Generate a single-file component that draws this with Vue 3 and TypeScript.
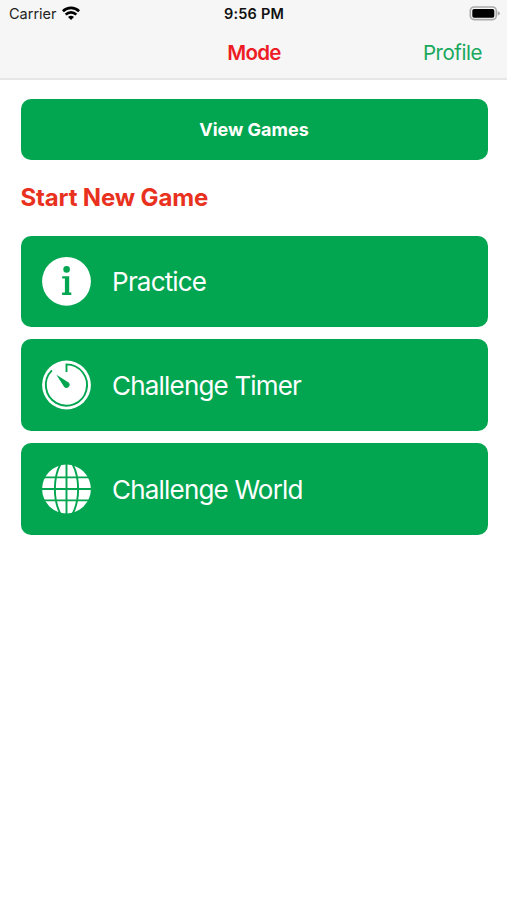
<script setup lang="ts">
type ModeIcon = 'info' | 'timer' | 'globe'

interface GameMode {
  icon: ModeIcon
  label: string
}

const modes: GameMode[] = [
  { icon: 'info', label: 'Practice' },
  { icon: 'timer', label: 'Challenge Timer' },
  { icon: 'globe', label: 'Challenge World' },
]
</script>

<template>
  <div class="screen">
    <header class="top">
      <div class="status">
        <div class="carrier">
          <span>Carrier</span>
          <svg class="wifi" viewBox="0 0 18 14" width="18" height="14">
            <g fill="none" stroke="#000" stroke-width="2.7">
              <path d="M0.9 5.2A11.6 11.6 0 0 1 17.1 5.2" />
              <path d="M3.7 8.6A7.5 7.5 0 0 1 14.3 8.6" />
            </g>
            <path d="M9 14L6 11.1A4.3 4.3 0 0 1 12 11.1Z" />
          </svg>
        </div>
        <span class="clock">9:56 PM</span>
        <svg class="battery" viewBox="0 0 32 15" width="32" height="15">
          <rect x="1.3" y="1" width="26" height="12.6" rx="3.8" fill="#f6f6f6" stroke="#aaa" stroke-width="1.6" />
          <rect x="3.3" y="3" width="22" height="8.8" rx="1.8" />
          <path d="M28.6 5.2Q31 5.8 31 7.4T28.6 9.6Z" fill="#aaa" />
        </svg>
      </div>
      <nav class="nav">
        <h1 class="title">Mode</h1>
        <a class="profile">Profile</a>
      </nav>
    </header>
    <main class="content">
      <button class="view">View Games</button>
      <h2 class="heading">Start New Game</h2>
      <div class="modes">
        <button v-for="mode in modes" :key="mode.label" class="mode">
          <svg class="icon" viewBox="0 0 50 50" width="50" height="50">
            <template v-if="mode.icon === 'info'">
              <circle cx="24.5" cy="25.3" r="24.4" fill="#fff" />
              <circle cx="24.6" cy="13.4" r="3.3" fill="#02a650" />
              <path d="M20.2 20.2H27.2V36.6H29.3V38.9H20.1V36.6H22.9V22.5H20.2Z" fill="#02a650" />
            </template>
            <template v-else-if="mode.icon === 'timer'">
              <circle cx="24.5" cy="25" r="24.4" fill="#fff" />
              <path d="M24.5 12V4.4A20.6 20.6 0 1 1 9.9 10.4" fill="none" stroke="#02a650" stroke-width="1.9" />
              <path d="M14.4 14.8L26.6 22.6A3.1 3.1 0 1 1 22.2 27Z" fill="#02a650" />
            </template>
            <template v-else>
              <circle cx="24.5" cy="25" r="24.4" fill="#fff" />
              <path
                d="M0 13.4H50M0 25H50M0 36.4H50M24.5 0V50M18.5 0C11 14 11 36 18.5 50M30.5 0C38 14 38 36 30.5 50"
                fill="none"
                stroke="#02a650"
                stroke-width="1.9"
              />
            </template>
          </svg>
          <span class="label">{{ mode.label }}</span>
        </button>
      </div>
    </main>
  </div>
</template>

<style>
body {
  background: #fff;
}
</style>

<style scoped>
.screen {
  height: 900px;
  box-sizing: border-box;
  background: #fff;
  font-family: Inter, 'Liberation Sans', sans-serif;
  overflow: hidden;
}
.top {
  height: 80px;
  box-sizing: border-box;
  background: #f6f6f6;
  border-bottom: 2px solid #e6e6e6;
}
.status,
.nav {
  display: grid;
  grid-template-columns: 1fr auto 1fr;
  align-items: center;
}
.status {
  height: 27px;
  padding: 0 6px 0 9px;
}
.carrier {
  display: flex;
  align-items: center;
  gap: 5px;
  font-size: 14.5px;
  color: #222;
}
.wifi {
  margin-top: -2px;
}
.clock {
  margin-right: 2px;
  font-size: 14.5px;
  font-weight: 600;
  letter-spacing: 0.2px;
  color: #111;
}
.battery {
  justify-self: end;
}
.nav {
  height: 51px;
  padding: 0 25px;
}
.title {
  grid-column: 2;
  margin: 0 -1px 0 0;
  font-size: 20.5px;
  font-weight: 600;
  letter-spacing: -0.65px;
  color: #ee1c25;
}
.profile {
  justify-self: end;
  font-size: 20.5px;
  letter-spacing: -0.45px;
  color: #17a85c;
}
.content {
  padding: 18.5px 19.5px 0 20.5px;
}
button {
  display: flex;
  align-items: center;
  width: 100%;
  margin: 0;
  border: 0;
  border-radius: 10px;
  background: #02a650;
  color: #fff;
  font-family: inherit;
}
.view {
  justify-content: center;
  height: 61px;
  padding: 0;
  font-size: 18px;
  font-weight: 700;
}
.heading {
  margin: 0;
  height: 76px;
  line-height: 76px;
  font-size: 24px;
  font-weight: 700;
  letter-spacing: -0.15px;
  color: #e93120;
}
.modes {
  display: grid;
  gap: 12.3px;
}
.mode {
  height: 91.5px;
  padding: 0 21px;
  gap: 20.6px;
}
.icon {
  flex: none;
}
.label {
  padding-top: 1px;
  font-size: 26px;
  font-weight: 400;
  letter-spacing: -0.82px;
}
</style>
